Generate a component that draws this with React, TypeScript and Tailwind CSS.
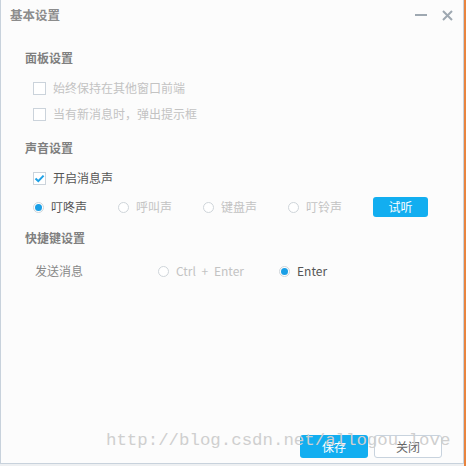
import { useState } from 'react';

const FONT = { fontFamily: "'Noto Sans CJK SC', 'Noto Sans', sans-serif" };

const SOUNDS = ['叮咚声', '呼叫声', '键盘声', '叮铃声'];

function CheckBox({ checked }: { checked?: boolean }) {
    return (
        <span className="w-[13px] h-[13px] border border-[#cbd3db] bg-white flex items-center justify-center shrink-0">
            {checked && (
                <svg width="11" height="9" viewBox="0 0 11 9">
                    <path d="M1.5 4.5 L4.3 7.2 L9.6 1.6" fill="none" stroke="#1ea1e6" strokeWidth="2" />
                </svg>
            )}
        </span>
    );
}

function Radio({ checked }: { checked?: boolean }) {
    return (
        <span className="w-[11px] h-[11px] rounded-full border border-[#cfd5da] bg-white flex items-center justify-center shrink-0">
            {checked && <span className="w-[7px] h-[7px] rounded-full bg-[#1a9fe6]" />}
        </span>
    );
}

export default function App() {
    const [sound, setSound] = useState(0);
    const [sendKey, setSendKey] = useState('enter');

    return (
        <div className="w-[466px] h-[466px] bg-[#eef0f2] border-r-2 border-[#e8843f] overflow-hidden" style={FONT}>
            <div className="relative w-[464px] h-[464px] bg-[#fcfcfc] border-l border-r border-b border-[#c8d2dc] flex flex-col text-[12px]">
                {/* title bar */}
                <div className="h-[30px] flex items-center pl-[9px] pr-[10px]">
                    <span className="text-[#8c8c8c] font-semibold text-[12.5px]">基本设置</span>
                    <div className="ml-auto flex items-center gap-[15px]">
                        <svg width="12" height="12" viewBox="0 0 12 12">
                            <path d="M0 6 H12" stroke="#9ea8b1" strokeWidth="2" />
                        </svg>
                        <svg width="11" height="11" viewBox="0 0 11 11">
                            <path d="M1 1 L10 10 M10 1 L1 10" stroke="#9ea8b1" strokeWidth="2" />
                        </svg>
                    </div>
                </div>

                <div className="pl-[24px]">
                    <div className="h-[20px] mt-[18px] flex items-center font-bold text-[#7f7f7f]">面板设置</div>
                    <div className="pl-[8px] mt-[7px]">
                        <div className="h-[26px] flex items-center gap-[7px] text-[#c3c3c3]">
                            <CheckBox />
                            <span>始终保持在其他窗口前端</span>
                        </div>
                        <div className="h-[26px] flex items-center gap-[7px] text-[#c3c3c3]">
                            <CheckBox />
                            <span>当有新消息时，弹出提示框</span>
                        </div>
                    </div>

                    <div className="h-[20px] mt-[11px] flex items-center font-bold text-[#7f7f7f]">声音设置</div>
                    <div className="pl-[8px] mt-[7px]">
                        <div className="h-[26px] flex items-center gap-[7px] text-[#555]">
                            <CheckBox checked />
                            <span>开启消息声</span>
                        </div>
                        <div className="h-[26px] mt-[3px] flex items-center">
                            {SOUNDS.map((s, i) => (
                                <button
                                    key={s}
                                    onClick={() => setSound(i)}
                                    className={`w-[85px] flex items-center gap-[7px] ${sound === i ? 'text-[#555]' : 'text-[#c3c3c3]'}`}
                                >
                                    <Radio checked={sound === i} />
                                    <span>{s}</span>
                                </button>
                            ))}
                            <button className="w-[55px] h-[20px] rounded-[3px] bg-[#12aef0] text-white flex items-center justify-center">
                                试听
                            </button>
                        </div>
                    </div>

                    <div className="h-[20px] mt-[8px] flex items-center font-bold text-[#7f7f7f]">快捷键设置</div>
                    <div className="h-[26px] mt-[10px] pl-[10px] flex items-center">
                        <span className="w-[123px] text-[#888]">发送消息</span>
                        <button
                            onClick={() => setSendKey('ctrl')}
                            className={`w-[121px] flex items-center gap-[7px] ${sendKey === 'ctrl' ? 'text-[#555]' : 'text-[#c3c3c3]'}`}
                        >
                            <Radio checked={sendKey === 'ctrl'} />
                            <span className="[word-spacing:3px]">Ctrl + Enter</span>
                        </button>
                        <button
                            onClick={() => setSendKey('enter')}
                            className={`flex items-center gap-[7px] ${sendKey === 'enter' ? 'text-[#555]' : 'text-[#c3c3c3]'}`}
                        >
                            <Radio checked={sendKey === 'enter'} />
                            <span>Enter</span>
                        </button>
                    </div>
                </div>

                <div className="flex-1" />

                {/* footer */}
                <div className="flex justify-end gap-[6px] pr-[21px] pb-[5px]">
                    <button className="w-[68px] h-[23px] rounded-[3px] bg-[#12aef0] text-white">保存</button>
                    <button className="w-[68px] h-[23px] rounded-[3px] bg-white border border-[#c8d3de] text-[#666]">关闭</button>
                </div>

                {/* watermark */}
                <div
                    className="absolute left-[105px] top-[432px] text-[17.4px] leading-none text-[#cfcfcf] pointer-events-none whitespace-nowrap"
                    style={{ fontFamily: "'Liberation Mono', monospace" }}
                >
                    http://blog.csdn.net/allogou_love
                </div>
            </div>
        </div>
    );
}
